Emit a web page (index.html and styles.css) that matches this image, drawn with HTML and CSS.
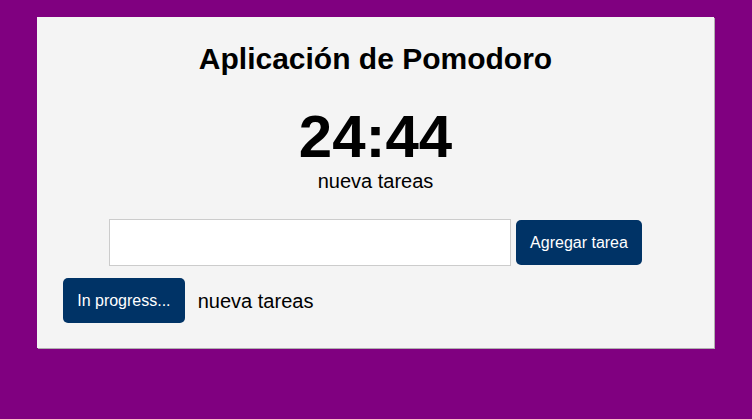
FILE: index.html
```html
<!DOCTYPE html>
<html lang="es">
<head>
<meta charset="utf-8">
<title>Aplicación de Pomodoro</title>
<link rel="stylesheet" href="styles.css">
</head>
<body>
<div class="card">
  <h1 class="title">Aplicación de Pomodoro</h1>
  <div class="timer">24:44</div>
  <div class="current">nueva tareas</div>
  <div class="add-row">
    <input class="task-input" type="text">
    <button class="btn">Agregar tarea</button>
  </div>
  <ul class="tasks">
    <li class="task">
      <button class="btn">In progress...</button>
      <span class="task-name">nueva tareas</span>
    </li>
  </ul>
</div>
</body>
</html>
```

FILE: styles.css
```css
html, body {
  margin: 0;
  padding: 0;
}
body {
  background: #800080;
  font-family: "Liberation Sans", Arial, sans-serif;
  color: #000;
  height: 419px;
}
.card {
  box-sizing: border-box;
  margin: 17px 38px 0 37px;
  background: #f4f4f4;
  padding: 24px 26px 25px 26px;
  box-shadow: 1px 1px 0 #b0b0b0;
  text-align: center;
}
.title {
  margin: 0;
  font-size: 30px;
  line-height: 36px;
  font-weight: bold;
}
.timer {
  margin-top: 28px;
  font-size: 60px;
  line-height: 64px;
  font-weight: bold;
}
.current {
  font-size: 20px;
  line-height: 24px;
}
.add-row {
  margin-top: 26px;
  display: flex;
  justify-content: center;
  align-items: center;
  gap: 5px;
}
.task-input {
  box-sizing: border-box;
  width: 402px;
  height: 47px;
  border: 1px solid #ccc;
  background: #fff;
  padding: 10px;
  font-size: 16px;
  margin: 0;
}
.btn {
  box-sizing: border-box;
  height: 45px;
  padding: 0 14.2px;
  border: none;
  border-radius: 5px;
  background: #003366;
  color: #fff;
  font-family: "Liberation Sans", Arial, sans-serif;
  font-size: 16px;
  margin: 0;
}
.tasks {
  list-style: none;
  margin: 12px 0 0 0;
  padding: 0;
}
.task {
  display: flex;
  align-items: center;
  gap: 13px;
  text-align: left;
}
.task-name {
  font-size: 20px;
  line-height: 24px;
}
```
